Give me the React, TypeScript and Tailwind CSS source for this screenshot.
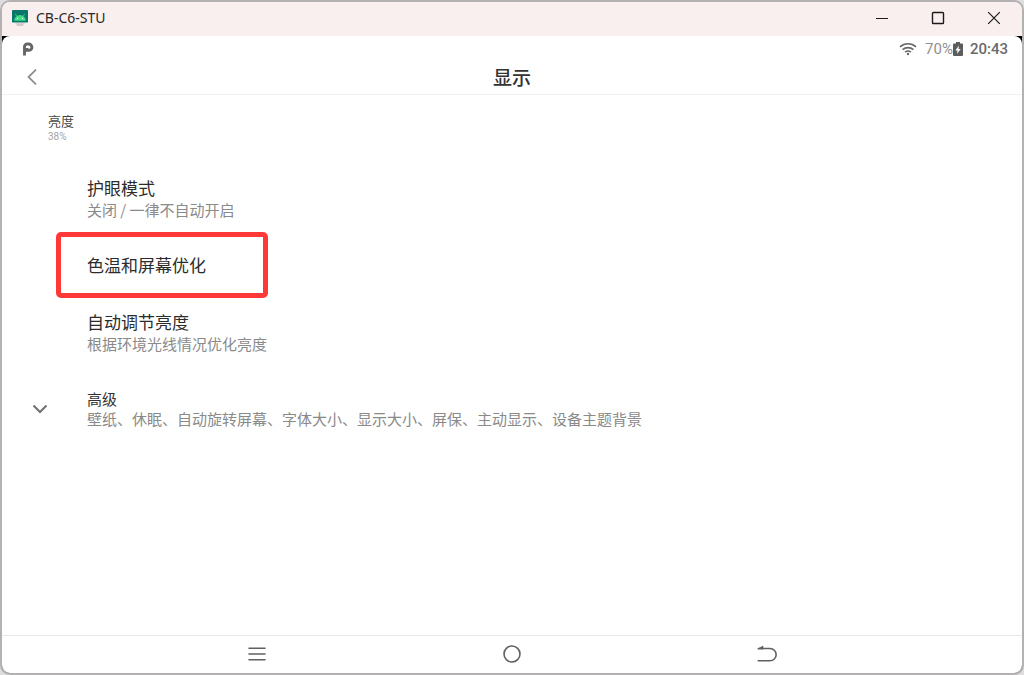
import type { ReactNode } from "react";

type SettingProps = { title: string; summary?: string };

function AppIcon() {
  return (
    <svg viewBox="0 0 16 16" className="h-4 w-4" aria-hidden="true">
      <rect width="16" height="12.5" rx="0.8" fill="#08766a" />
      <path d="M2.2 10.8a5.8 5.8 0 0 1 11.6 0z" fill="#3ddc84" />
      <path d="M4.8 6.3 3.3 3.8M11.2 6.3l1.5-2.5" stroke="#3ddc84" strokeWidth="0.8" />
      <circle cx="5.5" cy="8.5" r="0.7" fill="#fff" />
      <circle cx="10.5" cy="8.5" r="0.7" fill="#fff" />
      <path d="M3.5 13.2h9v1.2h-1.3V16H4.8v-1.6H3.5z" fill="#cfc9c9" />
    </svg>
  );
}

function WindowButton({ label, children }: { label: string; children: ReactNode }) {
  return (
    <button aria-label={label} className="flex w-14 items-center justify-center self-stretch">
      <svg viewBox="0 0 14 14" className="h-3.5 w-3.5" fill="none" stroke="#1c1a1a" strokeWidth="1.4">
        {children}
      </svg>
    </button>
  );
}

function TitleBar() {
  return (
    <div className="flex h-[34px] shrink-0 items-center bg-[#f9efee] pb-0.5 pl-2.5">
      <AppIcon />
      <span className="ml-2 flex-1 font-['Noto_Sans',sans-serif] text-sm text-[#2b2727]">CB-C6-STU</span>
      <WindowButton label="最小化">
        <path d="M1 7.500h12" strokeWidth="1" />
      </WindowButton>
      <WindowButton label="最大化">
        <rect x="1.5" y="1.5" width="11" height="11" rx="0.8" />
      </WindowButton>
      <WindowButton label="关闭">
        <path d="m1.2 1.2 11.6 11.6M12.8 1.2 1.2 12.8" strokeWidth="1.2" />
      </WindowButton>
    </div>
  );
}

function StatusBar() {
  return (
    <div className="flex h-[26px] items-center pr-3.5 pl-5 font-[Roboto,sans-serif] text-[15px]">
      <svg viewBox="0 0 12 14" className="h-3.5 w-3" fill="none" stroke="#666" aria-hidden="true">
        <path d="M2.5 13.5V4.8a2.8 2.8 0 0 1 2.8-2.8h1.4a3 3 0 0 1 0 6.4H5V6" strokeWidth="2.9" />
      </svg>
      <svg viewBox="0 0 18 14" className="ml-auto h-3.5 w-[18px]" fill="none" stroke="#686868" strokeWidth="1.6" aria-label="Wi-Fi">
        <path d="M1 4.8c4.6-4 11.4-4 16 0M3.6 7.6c3.1-2.7 7.7-2.7 10.8 0M6.1 10.2c1.7-1.4 4.1-1.4 5.8 0" />
        <circle cx="9" cy="12" r="1.2" fill="#686868" stroke="none" />
      </svg>
      <span className="ml-2 text-[#909090]">70%</span>
      <svg viewBox="0 0 10 14" className="h-3.5 w-2.5" aria-label="充电中">
        <path d="M3 0h4v1.5h2a1 1 0 0 1 1 1V13a1 1 0 0 1-1 1H1a1 1 0 0 1-1-1V2.500a1 1 0 0 1 1-1h2z" fill="#5c5c5c" />
        <path d="M6 3.500 2.300 8.600h2.200L4 12l3.700-5H5.500z" fill="#fff" />
      </svg>
      <span className="ml-[7px] font-medium text-[#6a6a6a]">20:43</span>
    </div>
  );
}

function Header() {
  return (
    <header className="grid h-[33px] grid-cols-3 items-center border-b border-[#f0f0f0] px-5 pb-0.5">
      <button aria-label="返回" className="flex h-7 w-5 items-center justify-center">
        <svg viewBox="0 0 10 16" className="h-4 w-2.5" fill="none" stroke="#8e8e8e" strokeWidth="1.8">
          <path d="M9 .7 1.500 8 9 15.300" />
        </svg>
      </button>
      <h1 className="text-center text-[19px] leading-6 font-medium text-[#333]">显示</h1>
    </header>
  );
}

function Setting({ title, summary }: SettingProps) {
  return (
    <button className="block w-full py-3 pl-[85px] text-left">
      <span className="block text-[17px] leading-[22px] text-[#2c2c2c]">{title}</span>
      {summary && <span className="block text-[15px] leading-[21px] text-[#8a8a8a]">{summary}</span>}
    </button>
  );
}

function NavButton({ label, children }: { label: string; children: ReactNode }) {
  return (
    <button aria-label={label} className="flex items-center justify-center">
      <svg viewBox="0 0 20 20" className="h-5 w-5" fill="none" stroke="#606060" strokeWidth="1.6" strokeLinecap="round">
        {children}
      </svg>
    </button>
  );
}

export default function App() {
  return (
    <div className="flex min-h-screen bg-[#dedede] font-['Noto_Sans_CJK_SC',sans-serif]">
      <div className="flex flex-1 flex-col overflow-hidden rounded-[10px] border-2 border-[#b3b1b1]">
        <TitleBar />
        <div className="flex flex-1 flex-col bg-black">
          <div className="flex flex-1 flex-col rounded-t-lg bg-white">
            <StatusBar />
            <Header />
            <main className="flex-1 pt-4">
              <div className="pl-[46px]">
                <div className="text-[13px] leading-5 text-[#484848]">亮度</div>
                <div className="font-[Roboto,sans-serif] text-[10px] leading-3 text-[#a5a5a5]">38%</div>
              </div>
              <div className="mt-[22px]">
                <Setting title="护眼模式" summary="关闭 / 一律不自动开启" />
                <button className="ml-[54px] block h-[66px] w-[212px] rounded-[5px] border-[5px] border-[#ff3838] pl-[26px] text-left text-[17px] leading-[22px] text-[#2c2c2c]">
                  色温和屏幕优化
                </button>
                <div className="mt-px">
                  <Setting title="自动调节亮度" summary="根据环境光线情况优化亮度" />
                </div>
                <button className="mt-[11px] flex w-full items-center py-3 pl-[30px] text-left">
                  <svg viewBox="0 0 16 10" className="mr-[39px] h-2.5 w-4 shrink-0" fill="none" stroke="#707070" strokeWidth="2" aria-hidden="true">
                    <path d="m1.500 1.500 6.500 6.500 6.500-6.500" />
                  </svg>
                  <span className="text-[15px] leading-5">
                    <span className="block text-[#333]">高级</span>
                    <span className="block text-[#8a8a8a]">壁纸、休眠、自动旋转屏幕、字体大小、显示大小、屏保、主动显示、设备主题背景</span>
                  </span>
                </button>
              </div>
            </main>
            <nav className="grid h-[38px] grid-cols-3 border-t border-[#e8e8e8] px-[12.5%] pb-px">
              <NavButton label="菜单">
                <path d="M2 4.200h16M2 10h16M2 15.800h16" />
              </NavButton>
              <NavButton label="主页">
                <circle cx="10" cy="10" r="8" />
              </NavButton>
              <NavButton label="后退">
                <path d="M1.500 4.500h11.500a6 6 0 0 1 0 12.300H1.200" />
                <path d="M1 4.800 6 2v2.800z" fill="#606060" strokeWidth="0.6" />
              </NavButton>
            </nav>
          </div>
        </div>
      </div>
    </div>
  );
}
